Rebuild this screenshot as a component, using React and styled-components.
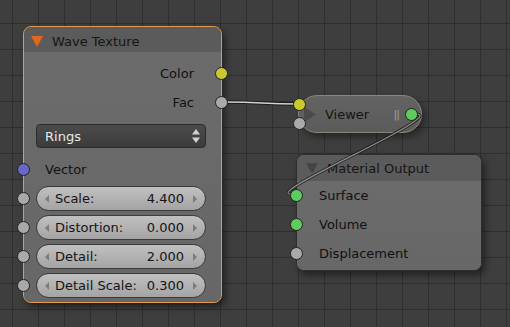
import React from "react";
import styled, { createGlobalStyle } from "styled-components";

const GlobalStyle = createGlobalStyle`
  html, body { margin: 0; padding: 0; background: #3d3d3d; }
  body { font-family: "DejaVu Sans", "Liberation Sans", sans-serif; }
`;

const Canvas = styled.div`
  position: relative;
  width: 510px;
  height: 327px;
  overflow: hidden;
  background-color: #3e3e3e;
  background-image:
    linear-gradient(to right, #2f2f2f 1px, transparent 1px),
    linear-gradient(to bottom, #2f2f2f 1px, transparent 1px);
  background-size: 26px 26px;
  background-position: 12px 23px;
  font-family: "DejaVu Sans", "Liberation Sans", sans-serif;
  font-size: 13px;
  color: #111;
`;

const NodeFrame = styled.div`
  position: absolute;
  left: ${(p) => p.$x}px;
  top: ${(p) => p.$y}px;
  width: ${(p) => p.$w}px;
  height: ${(p) => p.$h}px;
  box-sizing: border-box;
  border: 1px solid ${(p) => (p.$selected ? "#e09a50" : "#2e2e2e")};
  border-radius: 8px;
  background: #6a6a6a;
  box-shadow: 3px 4px 7px rgba(0, 0, 0, 0.45);
  display: flex;
  flex-direction: column;
`;

const NodeHeader = styled.div`
  height: ${(p) => p.$h}px;
  box-sizing: border-box;
  flex: none;
  display: flex;
  align-items: center;
  gap: 9px;
  padding-left: ${(p) => p.$pad}px;
  padding-top: ${(p) => p.$pt || 0}px;
  background: #5b5b5b;
  border-radius: 7px 7px 0 0;
  color: #151515;
`;

const NodeBody = styled.div`
  display: flex;
  flex-direction: column;
  padding-top: ${(p) => p.$top || 0}px;
  background: linear-gradient(#6b6b6b, #676767);
  flex: 1;
  border-radius: 0 0 7px 7px;
`;

const Row = styled.div`
  position: relative;
  height: 29px;
  display: flex;
  align-items: center;
  justify-content: ${(p) => (p.$out ? "flex-end" : "flex-start")};
  padding-left: ${(p) => (p.$out ? 0 : p.$pl)}px;
  padding-right: ${(p) => (p.$out ? 27 : p.$pr || 0)}px;
`;

const Socket = styled.span`
  position: absolute;
  z-index: 3;
  top: 50%;
  ${(p) => (p.$out ? "right" : "left")}: -7px;
  width: 13px;
  height: 13px;
  margin-top: -7px;
  box-sizing: border-box;
  border-radius: 50%;
  border: 1px solid #222;
  background: ${(p) => p.$color};
`;

const Dropdown = styled.div`
  margin: 7px 15px 7px 12px;
  height: 24px;
  box-sizing: border-box;
  border: 1px solid #2c2c2c;
  border-radius: 4px;
  background: linear-gradient(#4b4b4b, #3c3c3c);
  display: flex;
  align-items: center;
  justify-content: space-between;
  padding: 0 5px 0 8px;
  color: #e8e8e8;
`;

const NumField = styled.div`
  flex: 1;
  height: 25px;
  box-sizing: border-box;
  border: 1px solid #3a3a3a;
  border-radius: 13px;
  background: linear-gradient(#c0c0c0, #a4a4a4);
  display: flex;
  align-items: center;
  padding: 0 8px;
  gap: 6px;
  color: #141414;
`;

const FieldLabel = styled.span`
  flex: 1;
`;

const FieldValue = styled.span`
  margin-right: 3px;
`;

const Arrow = styled.span`
  width: 0;
  height: 0;
  border-top: 4px solid transparent;
  border-bottom: 4px solid transparent;
  ${(p) =>
    p.$dir === "left"
      ? "border-right: 4px solid #7c7c7c;"
      : "border-left: 4px solid #7c7c7c;"}
`;

const ViewerFrame = styled.div`
  position: absolute;
  left: ${(p) => p.$x}px;
  top: ${(p) => p.$y}px;
  width: 124px;
  height: 38px;
  box-sizing: border-box;
  border: 1px solid #8c8474;
  border-radius: 19px;
  background: linear-gradient(#636363, #5b5b5b);
  box-shadow: 3px 4px 7px rgba(0, 0, 0, 0.4);
  display: flex;
  align-items: center;
  padding-left: 5px;
  gap: 9px;
  color: #151515;
`;

const GripMark = styled.span`
  margin-left: auto;
  margin-right: 22px;
  color: #a0a0a0;
  font-size: 11px;
  letter-spacing: -1px;
`;

const ViewerSocket = styled.span`
  position: absolute;
  z-index: 3;
  left: ${(p) => p.$x}px;
  top: ${(p) => p.$y}px;
  width: 13px;
  height: 13px;
  box-sizing: border-box;
  border-radius: 50%;
  border: 1px solid #222;
  background: ${(p) => p.$color};
`;

const LinkLayer = styled.svg`
  position: absolute;
  left: 0;
  top: 0;
  z-index: 2;
  pointer-events: none;
`;

const C = {
  yellow: "#c9c92e",
  gray: "#a9a9a9",
  blue: "#6666cc",
  green: "#5fcb5f",
};

function Triangle({ color, dir = "down" }) {
  const down = dir === "down";
  return (
    <svg width={12} height={down ? 11 : 15} viewBox={down ? "0 0 12 11" : "0 0 12 15"}>
      <polygon points={down ? "0,0 12,0 6,11" : "0,0 0,15 12,7.5"} fill={color} />
    </svg>
  );
}

function UpDown() {
  return (
    <svg width="8" height="16" viewBox="0 0 8 16">
      <polygon points="4,1 8,6.5 0,6.5" fill="#d0d0d0" />
      <polygon points="0,9.5 8,9.5 4,15" fill="#d0d0d0" />
    </svg>
  );
}

const fields = [
  ["Scale:", "4.400"],
  ["Distortion:", "0.000"],
  ["Detail:", "2.000"],
  ["Detail Scale:", "0.300"],
];

export default function App() {
  return (
    <>
      <GlobalStyle />
      <Canvas>
        <NodeFrame $x={23} $y={26} $w={199} $h={277} $selected>
          <NodeHeader $h={25} $pad={7} $pt={4}>
            <Triangle color="#e3661d" />
            <span>Wave Texture</span>
          </NodeHeader>
          <NodeBody $top={7}>
            <Row $out>
              Color
              <Socket $out $color={C.yellow} />
            </Row>
            <Row $out>
              Fac
              <Socket $out $color={C.gray} />
            </Row>
            <Dropdown>
              <span>Rings</span>
              <UpDown />
            </Dropdown>
            <Row $pl={21}>
              Vector
              <Socket $color={C.blue} />
            </Row>
            {fields.map(([l, v]) => (
              <Row key={l} $pl={12} $pr={15}>
                <Socket $color={C.gray} />
                <NumField>
                  <Arrow $dir="left" />
                  <FieldLabel>{l}</FieldLabel>
                  <FieldValue>{v}</FieldValue>
                  <Arrow $dir="right" />
                </NumField>
              </Row>
            ))}
          </NodeBody>
        </NodeFrame>

        <ViewerFrame $x={298} $y={95}>
          <Triangle color="#4b4b4b" dir="right" />
          <span>Viewer</span>
          <GripMark>||</GripMark>
        </ViewerFrame>
        <ViewerSocket $x={293} $y={98} $color={C.yellow} />
        <ViewerSocket $x={293} $y={117} $color={C.gray} />
        <ViewerSocket $x={405} $y={108} $color={C.green} />

        <NodeFrame $x={296} $y={154} $w={186} $h={117}>
          <NodeHeader $h={26} $pad={9}>
            <Triangle color="#454545" />
            <span>Material Output</span>
          </NodeHeader>
          <NodeBody>
            <Row $pl={22}>
              Surface
              <Socket $color={C.green} />
            </Row>
            <Row $pl={22}>
              Volume
              <Socket $color={C.green} />
            </Row>
            <Row $pl={22}>
              Displacement
              <Socket $color={C.gray} />
            </Row>
          </NodeBody>
        </NodeFrame>

        <LinkLayer width="510" height="327" viewBox="0 0 510 327">
          <g fill="none" strokeLinecap="round">
            <path d="M226,102 C262,102 262,104 298,104" stroke="#1c1c1c" strokeWidth="3.5" />
            <path d="M226,102 C262,102 262,104 298,104" stroke="#d2d2d2" strokeWidth="1.6" />
            <path d="M416,114 C450,114 262,194 291,194" stroke="#1c1c1c" strokeWidth="3" opacity="0.8" />
            <path d="M416,114 C450,114 262,194 291,194" stroke="#a8a8a8" strokeWidth="1.2" opacity="0.8" />
          </g>
        </LinkLayer>
      </Canvas>
    </>
  );
}
